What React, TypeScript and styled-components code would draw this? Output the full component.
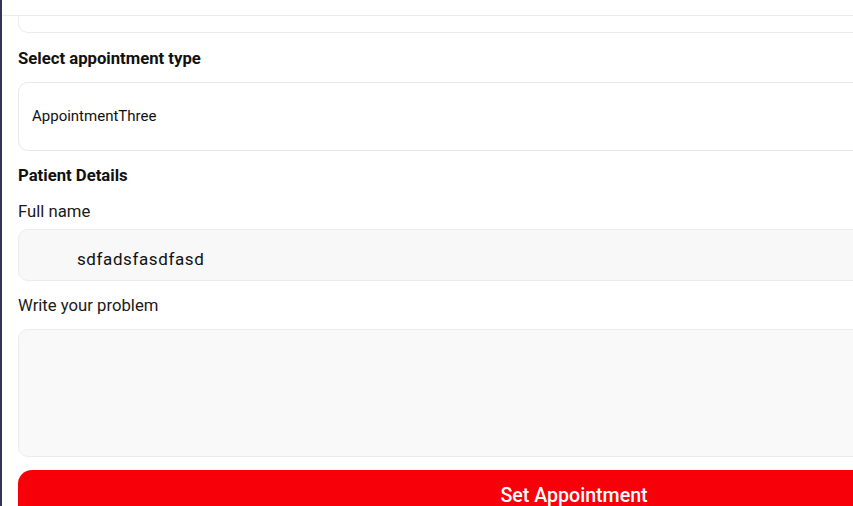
import React from 'react';
import styled, { createGlobalStyle } from 'styled-components';

const GlobalStyle = createGlobalStyle`
  html, body {
    margin: 0;
    padding: 0;
    background: #ffffff;
    overflow: hidden;
  }
  body {
    font-family: Roboto, "Noto Sans", Arial, sans-serif;
    color: #111111;
  }
`;

const Page = styled.div`
  width: 853px;
  height: 506px;
  overflow: hidden;
  border-left: 2px solid #34345a;
  box-sizing: border-box;
  background: #ffffff;
`;

const TopBar = styled.div`
  height: 15px;
  border-bottom: 1px solid #ececec;
`;

const Form = styled.div`
  width: 1112px;
  padding: 0 0 0 16px;
  display: flex;
  flex-direction: column;
`;

const CutBox = styled.div`
  height: 16px;
  border: 1px solid #ececec;
  border-top: none;
  border-radius: 0 0 10px 10px;
`;

const SectionTitle = styled.div`
  font-size: 16.7px;
  font-weight: 700;
  line-height: 18px;
`;

const FieldLabel = styled.div`
  font-size: 16.7px;
  font-weight: 400;
  line-height: 20px;
  color: #1a1a1a;
`;

const SelectBox = styled.div`
  height: 69px;
  box-sizing: border-box;
  border: 1px solid #e8e8e8;
  border-radius: 10px;
  background: #ffffff;
  display: flex;
  align-items: center;
  padding: 0 0 2px 13px;
  font-size: 15px;
  color: #111;
`;

const Input = styled.div`
  height: 52px;
  box-sizing: border-box;
  border: 1px solid #ececec;
  border-radius: 10px;
  background: #f8f8f8;
  display: flex;
  align-items: center;
  padding: 7px 0 0 58px;
  font-size: 17px;
  letter-spacing: 0.6px;
  color: #111;
`;

const TextArea = styled.div`
  height: 128px;
  box-sizing: border-box;
  border: 1px solid #ececec;
  border-radius: 10px;
  background: #f9f9f9;
`;

const SubmitButton = styled.button`
  height: 60px;
  border: none;
  border-radius: 14px;
  background: #f80009;
  color: #ffffff;
  font-family: Roboto, Arial, sans-serif;
  font-size: 19.6px;
  font-weight: 500;
  padding: 0 0 10px 0;
  cursor: pointer;
`;

const Gap = styled.div<{ $h: number }>`
  height: ${(p) => p.$h}px;
  flex-shrink: 0;
`;

export default function App() {
  return (
    <>
      <GlobalStyle />
      <Page>
        <TopBar />
        <Form>
          <CutBox />
          <Gap $h={17} />
          <SectionTitle>Select appointment type</SectionTitle>
          <Gap $h={14} />
          <SelectBox>AppointmentThree</SelectBox>
          <Gap $h={16} />
          <SectionTitle>Patient Details</SectionTitle>
          <Gap $h={17} />
          <FieldLabel>Full name</FieldLabel>
          <Gap $h={7} />
          <Input>sdfadsfasdfasd</Input>
          <Gap $h={15} />
          <FieldLabel>Write your problem</FieldLabel>
          <Gap $h={13} />
          <TextArea />
          <Gap $h={13} />
          <SubmitButton>Set Appointment</SubmitButton>
        </Form>
      </Page>
    </>
  );
}
